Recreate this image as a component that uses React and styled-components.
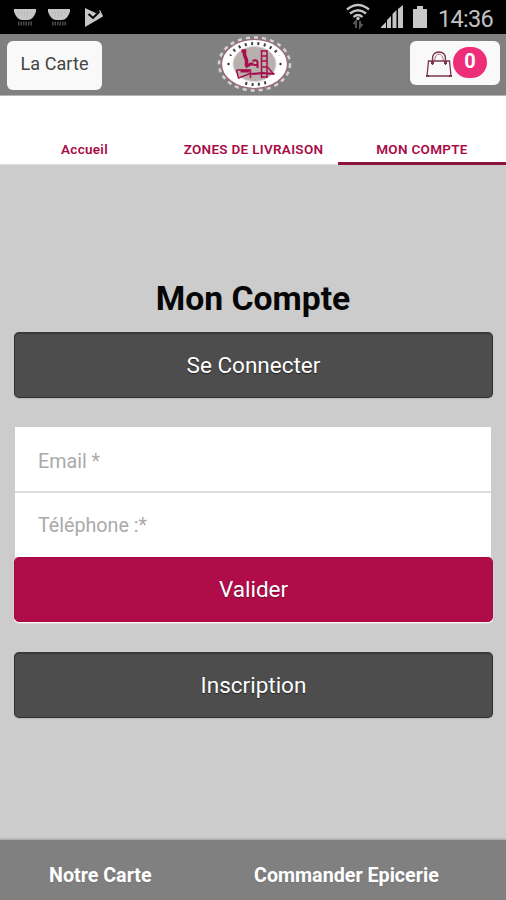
import React from "react";
import styled, { createGlobalStyle } from "styled-components";

const GlobalStyle = createGlobalStyle`
  * { box-sizing: border-box; }
  body { margin: 0; background: #ccc; }
  button, input { font: inherit; border: 0; margin: 0; outline: 0; }
`;

const Screen = styled.div`
  display: flex;
  flex-direction: column;
  width: 506px;
  height: 900px;
  overflow: hidden;
  background: #ccc;
  font-family: Roboto, sans-serif;
`;

const StatusBar = styled.div`
  display: flex;
  flex: none;
  justify-content: space-between;
  height: 34px;
  background: #000;
`;

const StatusIcons = styled.div`
  display: flex;
`;

const Clock = styled.span`
  width: 68px;
  padding-top: 4px;
  font-size: 23.5px;
  line-height: 30px;
  letter-spacing: -0.7px;
  color: #c2c2c2;
`;

const Header = styled.header`
  display: grid;
  flex: none;
  grid-template-columns: 1fr 80px 1fr;
  height: 62px;
  padding: 0 6px 0 7px;
  background: #808080;
  border-bottom: 1px solid #b5b5b5;
`;

const MenuButton = styled.button`
  width: 95px;
  height: 49px;
  margin-top: 7px;
  padding: 0 0 5px;
  border-radius: 6px;
  background: #f9f9f9;
  color: #444;
  font-size: 18px;
  letter-spacing: 0.1px;
`;

const CartButton = styled.button`
  display: flex;
  justify-self: end;
  width: 90px;
  height: 44px;
  margin-top: 7px;
  padding: 6px 0 0 15px;
  border-radius: 6px;
  background: #f9f9f9;
`;

const CartCount = styled.span`
  width: 34px;
  height: 31px;
  margin-left: -2px;
  border-radius: 16px;
  background: #ed2d78;
  color: #fff;
  font-size: 20px;
  font-weight: 700;
  line-height: 29px;
  text-align: center;
`;

const Tabs = styled.nav`
  display: grid;
  flex: none;
  grid-template-columns: 169px 169px 168px;
  height: 69px;
  background: #fff;
`;

const Tab = styled.a`
  padding-top: 45px;
  border-bottom: ${({ $active }) => ($active ? "3px solid #8c123f" : "1px solid #e0e0e0")};
  color: #a80b48;
  font-size: 13.5px;
  font-weight: 600;
  line-height: 16px;
  text-align: center;
  letter-spacing: 0.3px;
`;

const Main = styled.main`
  flex: 1;
  padding: 112px 14px 0;
`;

const Title = styled.h1`
  margin: 0 0 11px;
  color: #060606;
  font-size: 33.7px;
  font-weight: 700;
  line-height: 44px;
  text-align: center;
`;

const DarkButton = styled.button`
  display: block;
  width: 479px;
  height: 66px;
  padding-bottom: 3px;
  border: 1px solid #303030;
  border-top: 2px solid #393939;
  border-radius: 5px;
  background: #4d4d4d;
  box-shadow: 0 1px 1px #bababa;
  color: #fff;
  font-size: 22.5px;
  text-shadow: 0 1px 1px #222;
`;

const Form = styled.form`
  margin: 29px 0 30px;
`;

const Fields = styled.div`
  margin: 0 1px;
  background: #fff;
`;

const Field = styled.input`
  display: block;
  width: 100%;
  height: 64px;
  padding: 4px 23px 0;
  background: transparent;
  font-size: 19.7px;
  &::placeholder { color: #aaa; opacity: 1; }
  & + & { height: 66px; border-top: 2px solid #dedede; padding-top: 0; }
`;

const SubmitButton = styled(DarkButton)`
  height: 65px;
  border: 1px solid #a90943;
  background: #b00c4a;
  box-shadow: 0 1px 1px #fff, 0 2px 1px #e0d5d8;
  text-shadow: 0 1px 1px #6d0c30;
`;

const Footer = styled.footer`
  display: flex;
  flex: none;
  height: 60px;
  padding: 22px 0 0 49px;
  background: #808080;
  box-shadow: 0 -1px 2px #a0a0a0;
`;

const FooterLink = styled.a`
  width: ${({ $width }) => $width};
  color: #fff;
  font-size: 19.7px;
  font-weight: 700;
  line-height: 28px;
  white-space: nowrap;
  text-shadow: 0 1px 2px #777;
`;

const LogoSvg = styled.svg`
  display: block;
`;

function NotificationIcons() {
  return (
    <svg width="110" height="34" viewBox="0 0 110 34">
      {[14, 48].map((x) => (
        <g key={x} transform={`translate(${x} 8)`}>
          <path d="M0 1h22v2.500c-1.500 5-5 8.500-8 8.500H8C5 12 1.500 8.500 0 3.500z" fill="#c6c6c6" />
          <path d="M4 4.500h14M7 7h8" stroke="#aaa" strokeDasharray="1 2" />
          <path d="M4 15.500h14" stroke="#4a4a4a" strokeWidth="4" strokeDasharray="1.500 1" />
        </g>
      ))}
      <path d="M85 8l18 8.500L85 27z" fill="#c6c6c6" />
      <path d="M93 16l7-6 3 6-6 3z" fill="#c6c6c6" />
      <path d="M88.500 14l4.500 4 6.500-6.500" fill="none" stroke="#000" strokeWidth="2" />
    </svg>
  );
}

function SignalIcons() {
  return (
    <svg width="98" height="34" viewBox="341 0 98 34">
      <g fill="none" stroke="#c4c4c4" strokeWidth="2.300">
        <path d="M348 9.500Q359 .5 370 9.500" />
        <path d="M351 13.500Q359 7 367 13.500" />
        <path d="M354.500 17Q359 13 363.500 17" />
      </g>
      <circle cx="359" cy="18.500" r="1.700" fill="#c4c4c4" />
      <path d="M357 28v-7l-2.500 3M361 21v6l2.500-3" fill="none" stroke="#555" strokeWidth="2" />
      <path d="M382 28V27l5-5v6zM388 28v-8l4-4v12zM393.500 28V14l4-4v18zM399 28V9l5-4v23z" fill="#c4c4c4" />
      <path d="M414 9h4V6h6v3h4v19h-14z" fill="#c8c8c8" />
    </svg>
  );
}

function Logo() {
  return (
    <LogoSvg width="80" height="61" viewBox="0 0 80 61" aria-label="Logo">
      <g transform="translate(40.500 30)">
        <ellipse rx="35.500" ry="26.500" fill="none" stroke="#d7d0d2" strokeWidth="2.600" strokeDasharray="4 4.100" />
        <ellipse rx="33" ry="24.500" fill="#fff" stroke="#996577" strokeWidth="1.200" />
        <ellipse rx="27" ry="20.500" fill="none" stroke="#3d3d3d" strokeWidth="3" strokeDasharray="2 4.500" pathLength="152" clipPath="url(#lettering)" />
        <clipPath id="lettering">
          <path d="M-25-24h50v16h-50zM-10 12h22v12h-22z" />
        </clipPath>
        <ellipse rx="21.500" ry="17.500" fill="#b7b0ad" stroke="#ddd7d7" />
        <circle cx="-26" cy="0" r="1.200" fill="#333" />
        <circle cx="26" cy="0" r="1.200" fill="#333" />
        <g fill="none" stroke="#a80e4c">
          <path d="M-13-13h3v4l2 5v6" strokeWidth="3.500" />
          <path d="M-9 3l5-3h3" strokeWidth="3" />
          <path d="M-2-3q4-2 5 1v6M-1 1h4" strokeWidth="2" />
          <path d="M-18 6h14v8M-18 6l2 8 13-5" strokeWidth="1.500" />
          <path d="M-14 7h9" strokeWidth="3" />
          <path d="M-3 10l11-1 12 1" strokeWidth="2.200" />
          <path d="M7-14v28M12.500-14v28M7-13h6M7-8h6M7-3h6M7 3h6M7 13h6" strokeWidth="1.500" />
          <path d="M13 3l6 7" strokeWidth="1.400" />
        </g>
      </g>
    </LogoSvg>
  );
}

function BagIcon() {
  return (
    <svg width="30" height="33" viewBox="0 0 30 33">
      <g fill="none" stroke="#7c3550" strokeWidth="1.300">
        <path d="M3.500 14h21l1.500 15h-24z" />
        <path d="M7.500 18V12q0-7 6.500-7t6.500 7v6" />
        <path d="M9.500 14q1-7 4.500-7t4.500 7" strokeWidth=".7" />
      </g>
      <path d="M6 14h3v3h-3zM19 14h3v3h-3zM1 28h3v2h-3zM24 28h3v2h-3z" fill="#7c3550" />
    </svg>
  );
}

export default function App() {
  return (
    <Screen>
      <GlobalStyle />
      <StatusBar>
        <NotificationIcons />
        <StatusIcons>
          <SignalIcons />
          <Clock>14:36</Clock>
        </StatusIcons>
      </StatusBar>
      <Header>
        <MenuButton>La Carte</MenuButton>
        <Logo />
        <CartButton>
          <BagIcon />
          <CartCount>0</CartCount>
        </CartButton>
      </Header>
      <Tabs>
        <Tab>Accueil</Tab>
        <Tab>ZONES DE LIVRAISON</Tab>
        <Tab $active>MON COMPTE</Tab>
      </Tabs>
      <Main>
        <Title>Mon Compte</Title>
        <DarkButton>Se Connecter</DarkButton>
        <Form>
          <Fields>
            <Field placeholder="Email *" />
            <Field placeholder="Téléphone :*" />
          </Fields>
          <SubmitButton type="button">Valider</SubmitButton>
        </Form>
        <DarkButton>Inscription</DarkButton>
      </Main>
      <Footer>
        <FooterLink $width="205px">Notre Carte</FooterLink>
        <FooterLink>Commander Epicerie</FooterLink>
      </Footer>
    </Screen>
  );
}
